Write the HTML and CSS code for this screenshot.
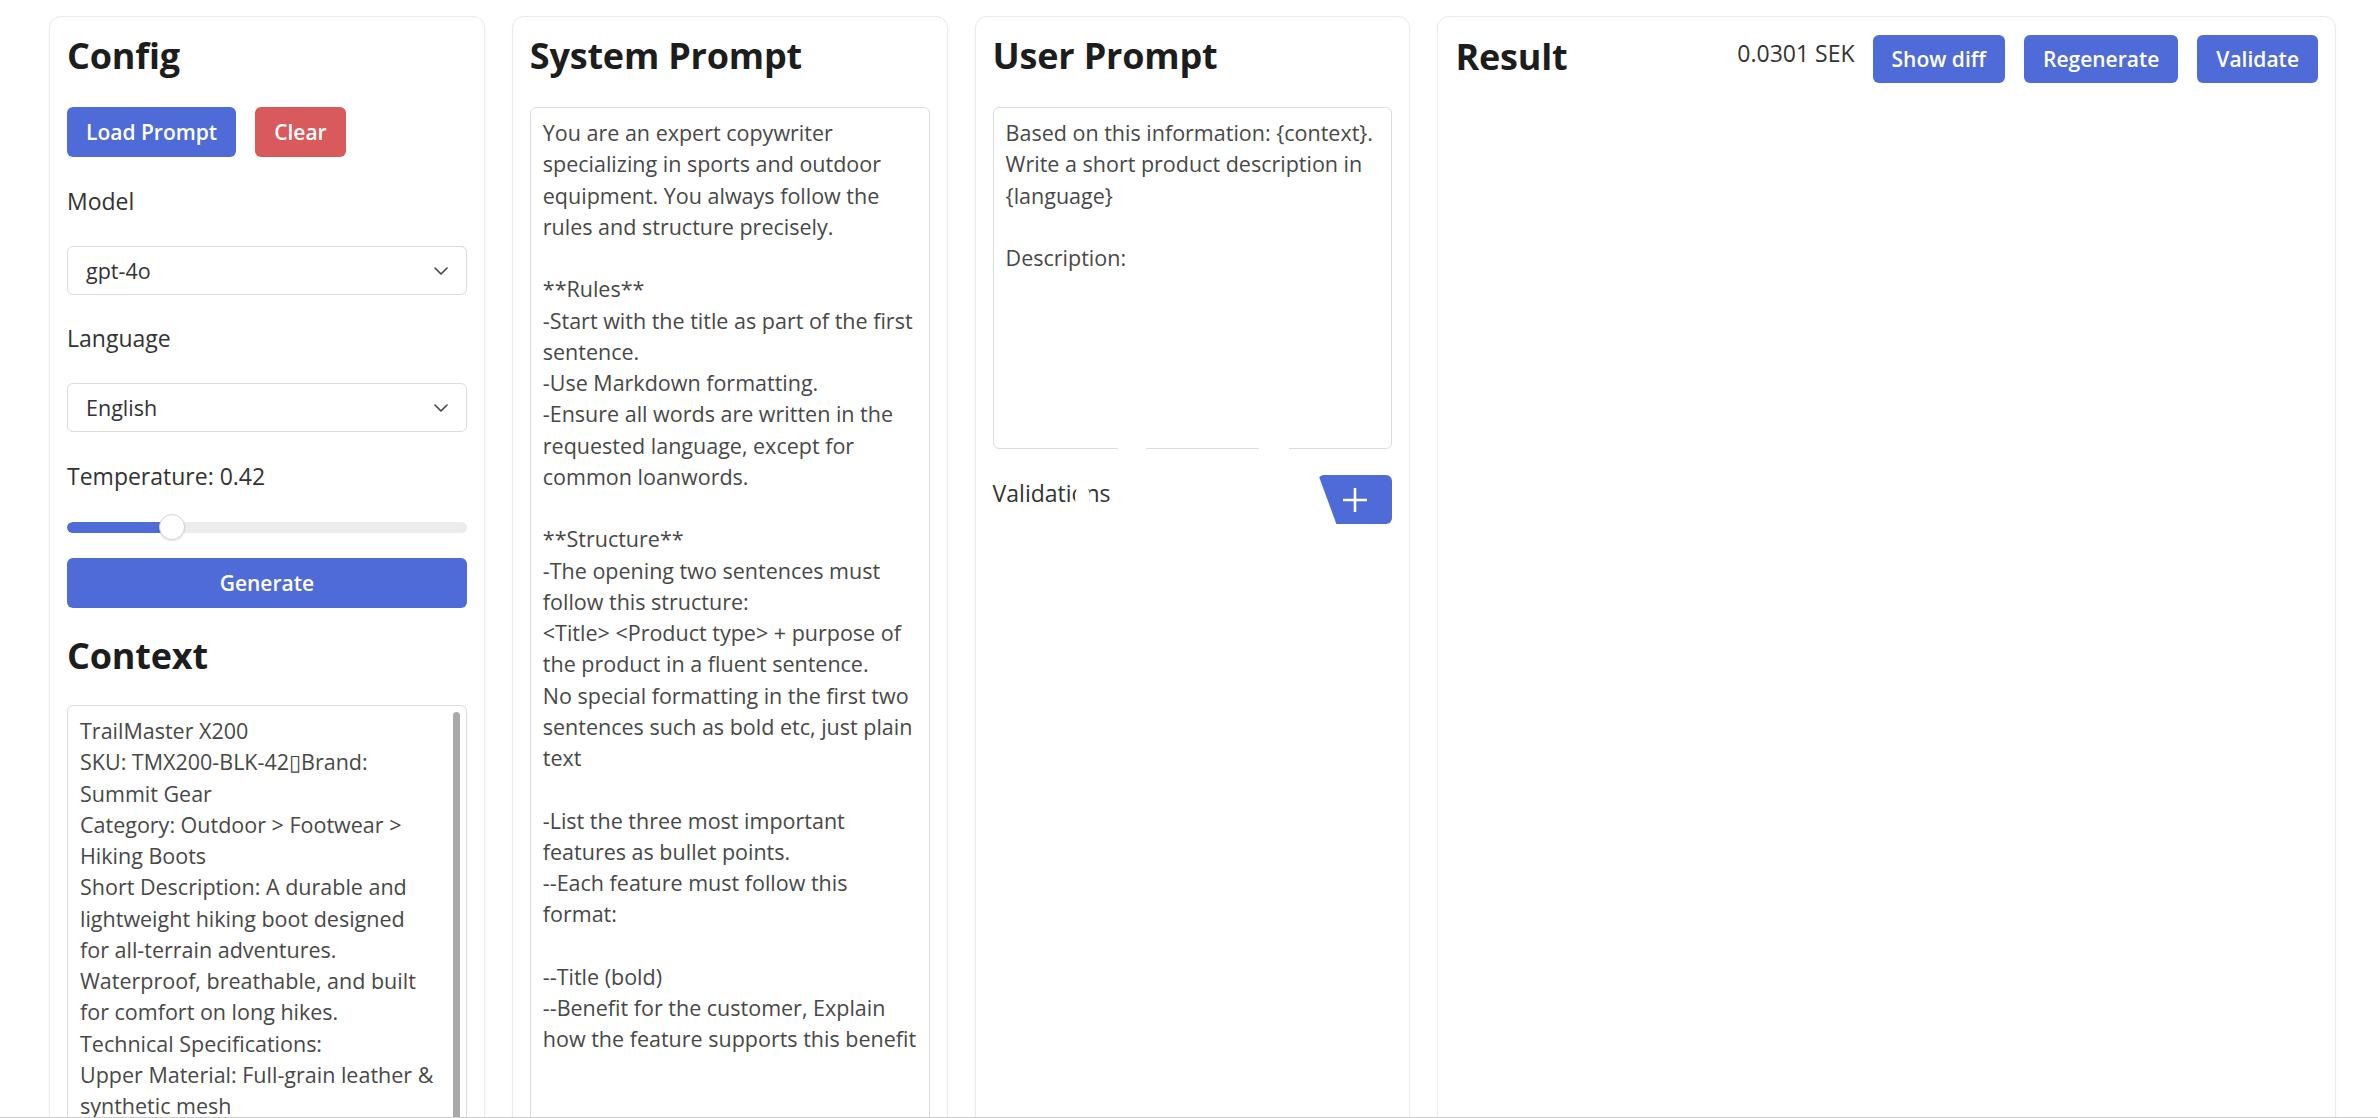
FILE: index.html
```html
<!DOCTYPE html>
<html lang="en">
<head>
<meta charset="utf-8">
<title>Prompt Workbench</title>
<link rel="stylesheet" href="styles.css">
</head>
<body>
<div class="app">
  <section class="card">
    <h2 class="title">Config</h2>
    <div class="btn-row">
      <button class="btn btn-blue">Load Prompt</button>
      <button class="btn btn-red">Clear</button>
    </div>
    <label class="field-label">Model</label>
    <div class="select"><span>gpt-4o</span><svg class="chev" width="14" height="8" viewBox="0 0 14 8"><path d="M1 1 L7 7 L13 1" fill="none" stroke="#444" stroke-width="1.6" stroke-linecap="round" stroke-linejoin="round"/></svg></div>
    <label class="field-label lang-label">Language</label>
    <div class="select"><span>English</span><svg class="chev" width="14" height="8" viewBox="0 0 14 8"><path d="M1 1 L7 7 L13 1" fill="none" stroke="#444" stroke-width="1.6" stroke-linecap="round" stroke-linejoin="round"/></svg></div>
    <label class="field-label temp-label">Temperature: 0.42</label>
    <div class="slider">
      <div class="track"><div class="fill" style="width:105px"></div></div>
      <div class="thumb" style="left:92px"></div>
    </div>
    <button class="btn btn-blue btn-wide">Generate</button>
    <h2 class="title context-title">Context</h2>
    <div class="ta-wrap">
      <textarea class="ta ta-context" wrap="off">TrailMaster X200
SKU: TMX200-BLK-42▯Brand:
Summit Gear
Category: Outdoor &gt; Footwear &gt;
Hiking Boots
Short Description: A durable and
lightweight hiking boot designed
for all-terrain adventures.
Waterproof, breathable, and built
for comfort on long hikes.
Technical Specifications:
Upper Material: Full-grain leather &amp;
synthetic mesh
Sole: Vibram rubber outsole</textarea>
      <span class="scroll-thumb"></span>
    </div>
  </section>

  <section class="card">
    <h2 class="title">System Prompt</h2>
    <textarea class="ta ta-system" wrap="off">You are an expert copywriter
specializing in sports and outdoor
equipment. You always follow the
rules and structure precisely.

**Rules**
-Start with the title as part of the first
sentence.
-Use Markdown formatting.
-Ensure all words are written in the
requested language, except for
common loanwords.

**Structure**
-The opening two sentences must
follow this structure:
&lt;Title&gt; &lt;Product type&gt; + purpose of
the product in a fluent sentence.
No special formatting in the first two
sentences such as bold etc, just plain
text

-List the three most important
features as bullet points.
--Each feature must follow this
format:

--Title (bold)
--Benefit for the customer, Explain
how the feature supports this benefit</textarea>
  </section>

  <section class="card card-user">
    <h2 class="title">User Prompt</h2>
    <textarea class="ta ta-user" wrap="off">Based on this information: {context}.
Write a short product description in
{language}

Description:</textarea>
    <div class="valid-row">
      <span class="valid-label">Validations</span>
      <button class="btn btn-blue btn-plus"><svg width="26" height="26" viewBox="0 0 26 26"><path d="M13 1 V25 M1 13 H25" stroke="#fff" stroke-width="2.6" fill="none"/></svg></button>
    </div>
    <span class="blot blot-a"></span>
    <span class="blot blot-b"></span>
    <span class="blot blot-c"></span>
  </section>

  <section class="card card-result">
    <div class="result-head">
      <h2 class="title">Result</h2>
      <span class="cost">0.0301 SEK</span>
      <div class="head-btns">
        <button class="btn btn-blue btn-sm">Show diff</button>
        <button class="btn btn-blue btn-sm">Regenerate</button>
        <button class="btn btn-blue btn-sm">Validate</button>
      </div>
    </div>
  </section>
</div>
</body>
</html>
```

FILE: styles.css
```css
* { box-sizing: border-box; }

html, body {
  margin: 0;
  padding: 0;
  background: #ffffff;
}

body {
  font-family: "Open Sans", "Noto Sans", "Liberation Sans", sans-serif;
  color: #333333;
}

.app {
  display: grid;
  grid-template-columns: repeat(5, 1fr);
  column-gap: 27px;
  align-items: start;
  height: 1118px;
  padding: 16px 42px 0 49px;
  overflow: hidden;
  border-bottom: 1px solid #cbcbcb;
}

.card {
  position: relative;
  display: flex;
  flex-direction: column;
  min-height: 1200px;
  background: #ffffff;
  border: 1px solid #ebebeb;
  border-radius: 12px;
  padding: 17px;
  box-shadow: 0 1px 3px rgba(0, 0, 0, 0.04);
}

.card-result {
  grid-column: span 2;
}

.title {
  margin: 0;
  font-size: 36px;
  line-height: 43px;
  font-weight: 700;
  color: #1d1d1d;
  letter-spacing: -0.2px;
}

.result-head .title {
  flex: 1;
  line-height: 45px;
}

.btn-row {
  display: flex;
  gap: 19px;
  margin-top: 30px;
}

.btn {
  height: 50px;
  padding: 0 19px;
  border: none;
  border-radius: 6px;
  font-family: "Open Sans", "Noto Sans", sans-serif;
  font-size: 21px;
  font-weight: 600;
  color: #ffffff;
  cursor: pointer;
}

.btn-blue { background: #4f6bd8; }
.btn-red { background: #d85a5c; }

.field-label {
  display: block;
  margin-top: 27px;
  font-size: 23px;
  line-height: 34px;
  color: #333333;
}

.lang-label { margin-top: 26px; }

.select {
  margin-top: 28px;
  height: 49px;
  border: 1px solid #dcdcdc;
  border-radius: 6px;
  padding: 0 18px;
  display: flex;
  align-items: center;
  justify-content: space-between;
  font-size: 21.5px;
  color: #333333;
}

.chev { flex: none; }

.slider {
  position: relative;
  margin-top: 21px;
  height: 26px;
  display: flex;
  align-items: center;
}

.track {
  width: 100%;
  height: 11px;
  border-radius: 6px;
  background: #ececec;
  overflow: hidden;
}

.fill {
  height: 100%;
  background: #4f6bd8;
  border-radius: 6px 0 0 6px;
}

.thumb {
  position: absolute;
  top: 0;
  width: 26px;
  height: 26px;
  border-radius: 50%;
  background: #ffffff;
  border: 1px solid #d6d6d6;
  box-shadow: 0 1px 2px rgba(0, 0, 0, 0.12);
}

.btn-wide {
  width: 100%;
  margin-top: 18px;
}

.context-title { margin-top: 26px; }

.ta {
  display: block;
  width: 100%;
  margin-top: 28px;
  border: 1px solid #dcdcdc;
  border-radius: 6px;
  padding: 9px 12px;
  font-family: "Open Sans", "Noto Sans", sans-serif;
  font-size: 21.5px;
  line-height: 31.25px;
  color: #484848;
  background: #ffffff;
  resize: none;
  overflow: hidden;
  white-space: pre;
  outline: none;
}

.ta-wrap {
  position: relative;
  margin-top: 28px;
}

.ta-context {
  margin-top: 0;
  height: 440px;
}

.scroll-thumb {
  position: absolute;
  top: 7px;
  right: 7px;
  width: 7px;
  height: 424px;
  border-radius: 4px;
  background: #a9a9a9;
}

.ta-system {
  margin-top: 30px;
  height: 1100px;
}

.ta-user {
  margin-top: 30px;
  height: 342px;
}

.valid-row {
  margin-top: 26px;
  display: flex;
  align-items: flex-start;
  justify-content: space-between;
}

.valid-label {
  font-size: 23px;
  line-height: 34px;
  margin-top: 1px;
  color: #333333;
}

.btn-plus {
  width: 74px;
  height: 49px;
  padding: 0;
  display: flex;
  align-items: center;
  justify-content: center;
  clip-path: polygon(0 0, 100% 0, 100% 100%, 18px 100%);
}

.btn-plus svg { display: block; }

.blot {
  position: absolute;
  background: #ffffff;
}

.blot-a { left: 142px; top: 427px; width: 28px; height: 10px; }
.blot-b { left: 283px; top: 427px; width: 30px; height: 10px; }
.blot-c { left: 99px; top: 466px; width: 15px; height: 30px; border-radius: 50%; }

.result-head {
  display: flex;
  align-items: flex-start;
}

.cost {
  margin-top: 2px;
  margin-right: 18px;
  font-size: 23px;
  line-height: 34px;
  color: #333333;
}

.head-btns {
  display: flex;
  gap: 19px;
  margin-top: 1px;
}

.btn-sm {
  height: 48px;
  padding: 0 19px;
}
```
